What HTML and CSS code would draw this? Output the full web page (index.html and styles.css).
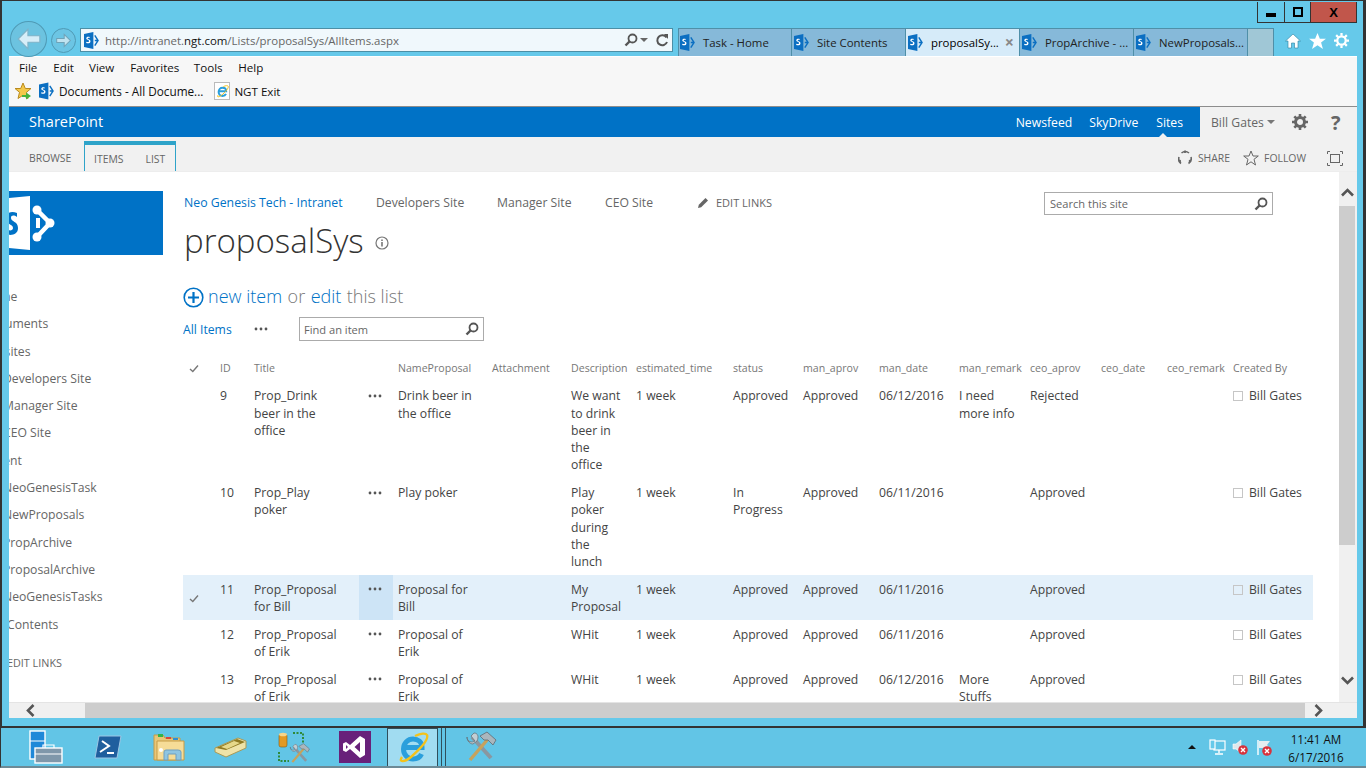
FILE: index.html
```html
<!DOCTYPE html>
<html lang="en">
<head>
<meta charset="utf-8">
<title>proposalSys</title>
<link rel="stylesheet" href="styles.css">
</head>
<body>
<svg class="defs" width="0" height="0" aria-hidden="true">
  <symbol id="sp" viewBox="0 0 16 18">
    <path d="M0 2 10 0V18L0 16Z" fill="#0b6fc2"/>
    <path d="M5.6 5.1C3.9 4.7 2.4 5.1 2.4 6.7c0 2 3 1.500 3 3 0 .9-1.300 1-3 .5v1.500c2 .6 4.500.3 4.500-2 0-2.100-3-1.700-3-3 0-.8 1-.9 2.700-.5Z" fill="#fff"/>
    <path d="M11.500 3.500 15 9l-3.500 5.500M11.500 9H15" fill="none" stroke="#0b6fc2" stroke-width="1.500"/>
  </symbol>
  <symbol id="dots" viewBox="0 0 14 4">
    <circle cx="2" cy="2" r="1.400" fill="#555"/><circle cx="7" cy="2" r="1.400" fill="#555"/><circle cx="12" cy="2" r="1.400" fill="#555"/>
  </symbol>
  <symbol id="lens" viewBox="0 0 14 14">
    <circle cx="8.500" cy="5.500" r="4" fill="none" stroke="#555" stroke-width="1.800"/>
    <path d="M5.500 8.500 1.500 12.500" stroke="#555" stroke-width="2.400"/>
  </symbol>
  <symbol id="tick" viewBox="0 0 10 9">
    <path d="M1 5 3.800 7.500 9 1.500" fill="none" stroke="#777" stroke-width="1.400"/>
  </symbol>
  <symbol id="ie" viewBox="0 0 32 32">
    <path d="M8 15.500H25C25 10 21 7 16 7 11 7 6.500 11 6.500 17S11 27 16 27c4 0 7-1.500 8.500-5" fill="none" stroke="#2a9fdc" stroke-width="5"/>
    <path d="M5 25C1 31 8 30 14 25 22 18 32 8 30 3c-1-2-6-2-12 1" fill="none" stroke="#f4c21a" stroke-width="2.400"/>
  </symbol>
  <symbol id="tools" viewBox="0 0 32 32">
    <path d="M7 6 26 27" stroke="#8a97a0" stroke-width="4"/>
    <path d="M2 6C2 11 7 12 10 10L6 5 9 2C13 2 14 6 12 10L8 13C5 13 2 10 2 6Z" fill="#c3ced4" stroke="#66727a" stroke-width=".8"/>
    <path d="M5 29 23 8" stroke="#c6a25c" stroke-width="3.400"/>
    <path d="M15 5 22 1 31 9 28 14 23 9 19 9Z" fill="#a9b6bd" stroke="#5e6a72" stroke-width=".8"/>
  </symbol>
  <symbol id="redx" viewBox="0 0 10 10">
    <circle cx="5" cy="5" r="4.800" fill="#d8323c"/>
    <path d="M3 3 7 7M7 3 3 7" stroke="#fff" stroke-width="1.400"/>
  </symbol>
</svg>

<div class="window">
  <div class="titlebar">
    <div class="caption">
      <div class="cap cap-min"><span class="min-glyph"></span></div>
      <div class="cap cap-max"><span class="max-glyph"></span></div>
      <div class="cap cap-close">X</div>
    </div>
  </div>

  <div class="navrow">
    <div class="back">
      <svg width="26" height="24" viewBox="0 0 24 22"><path d="M11 2 2 11l9 9v-6h11V8H11Z" fill="#d7eef8" stroke="#7fb3c8"/></svg>
    </div>
    <div class="forward">
      <svg width="17" height="15" viewBox="0 0 24 22"><path d="M13 2l9 9-9 9v-6H2V8h11Z" fill="#bfe3f0" stroke="#6fa3b8" stroke-width="1.500"/></svg>
    </div>
    <div class="urlbar">
      <svg class="url-sp" width="15" height="17"><use href="#sp"/></svg>
      <div class="url-text">http://intranet.<b>ngt.com</b>/Lists/proposalSys/AllItems.aspx</div>
      <svg class="url-lens" width="14" height="14"><use href="#lens"/></svg>
      <span class="url-caret"></span>
      <svg class="url-refresh" width="13" height="14" viewBox="0 0 13 14"><path d="M10.500 4.500A5 5 0 1 0 11 9" fill="none" stroke="#555" stroke-width="2"/><path d="M8 1 12 1 12 6Z" fill="#555"/></svg>
    </div>
    <div class="tabs">
      <div class="tab"><svg width="15" height="17"><use href="#sp"/></svg><span>Task - Home</span></div>
      <div class="tab"><svg width="15" height="17"><use href="#sp"/></svg><span>Site Contents</span></div>
      <div class="tab tab-active"><svg width="15" height="17"><use href="#sp"/></svg><span>proposalSy...</span><i class="tab-x">×</i></div>
      <div class="tab"><svg width="15" height="17"><use href="#sp"/></svg><span>PropArchive - ...</span></div>
      <div class="tab"><svg width="15" height="17"><use href="#sp"/></svg><span>NewProposals...</span></div>
      <div class="tab tab-new"></div>
    </div>
    <div class="ie-tools">
      <svg width="16" height="16" viewBox="0 0 16 16"><path d="M8 1 15.500 8H13V15H9.500V10H6.500V15H3V8H.5Z" fill="#fff" stroke="#2d7f9f" stroke-width=".6"/></svg>
      <svg width="17" height="16" viewBox="0 0 18 17"><path d="M9 0 11.500 6H18L12.800 10 14.800 17 9 13 3.200 17 5.200 10 0 6H6.500Z" fill="#fff"/></svg>
      <svg width="15" height="15" viewBox="0 0 16 16"><circle cx="8" cy="8" r="4.500" fill="none" stroke="#fff" stroke-width="2.400"/><path d="M8 0V3M8 13V16M0 8H3M13 8H16M2.300 2.300 4.500 4.500M11.500 11.500 13.700 13.700M13.700 2.300 11.500 4.500M4.500 11.500 2.300 13.700" stroke="#fff" stroke-width="2.400"/></svg>
    </div>
  </div>

  <div class="menus">
    <div class="menubar">
      <span class="m-file">File</span><span class="m-edit">Edit</span><span class="m-view">View</span><span class="m-fav">Favorites</span><span class="m-tools">Tools</span><span class="m-help">Help</span>
    </div>
    <div class="favbar">
      <svg class="fav-star" width="18" height="18" viewBox="0 0 18 18"><path d="M9 1 11.300 6.500H17L12.500 10.300 14 16.500 9 13.200 4 16.500 5.500 10.300 1 6.500H6.700Z" fill="#f4c84a" stroke="#b98a1e"/><path d="M8 13H12V10.500L17 14 12 17.500V15H8Z" fill="#46b23c"/></svg>
      <svg class="fav-sp" width="15" height="18"><use href="#sp"/></svg>
      <span class="fav-doc">Documents - All Docume...</span>
      <span class="fav-page"><svg width="13" height="13"><use href="#ie"/></svg></span>
      <span>NGT Exit</span>
    </div>
  </div>

  <div class="sp-top">
    <div class="sp-brand">SharePoint</div>
    <div class="sp-links">
      <span>Newsfeed</span><span>SkyDrive</span><span class="sp-sites">Sites</span>
    </div>
    <div class="sp-user">
      <span class="user-name">Bill Gates</span><span class="user-caret"></span>
      <svg class="user-gear" width="16" height="16" viewBox="0 0 16 16"><circle cx="8" cy="8" r="4.500" fill="none" stroke="#666" stroke-width="3"/><path d="M8 0V3M8 13V16M0 8H3M13 8H16M2.300 2.300 4.500 4.500M11.500 11.500 13.700 13.700M13.700 2.300 11.500 4.500M4.500 11.500 2.300 13.700" stroke="#666" stroke-width="2.600"/></svg>
      <span class="user-help">?</span>
    </div>
  </div>

  <div class="ribbon">
    <span class="rb-browse">BROWSE</span>
    <div class="rb-ctx"><span>ITEMS</span><span>LIST</span></div>
    <div class="rb-right">
      <svg width="14" height="16" viewBox="0 0 14 16"><path d="M3.500 3A6 6 0 0 1 11 3M13 7a6 6 0 0 1-2.500 6.500M3 13.500A6 6 0 0 1 1 7" fill="none" stroke="#666" stroke-width="1.600"/><circle cx="7" cy="1.800" r="1.300" fill="#666"/><circle cx="1.800" cy="11" r="1.300" fill="#666"/><circle cx="12" cy="11" r="1.300" fill="#666"/></svg>
      <span class="rb-share">SHARE</span>
      <svg class="rb-star" width="16" height="16" viewBox="0 0 16 16"><path d="M8 1 10 6H15.300L11 9.300 12.500 15 8 11.800 3.500 15 5 9.300 .7 6H6Z" fill="none" stroke="#666"/></svg>
      <span class="rb-follow">FOLLOW</span>
      <svg class="rb-focus" width="16" height="15" viewBox="0 0 16 15"><rect x="3.500" y="3.500" width="9" height="8" fill="none" stroke="#666"/><path d="M.5 3V.5H3M13 .5H15.500V3M15.500 12V14.500H13M3 14.500H.5V12" fill="none" stroke="#666"/></svg>
    </div>
  </div>

  <div class="viewport">
    <div class="page">
      <aside class="side">
        <div class="logo">
          <svg width="60" height="64" viewBox="0 0 60 64">
            <path d="M-10 8 21 5V59L-10 56Z" fill="#fff"/>
            <path d="M8 22C3 20-3 21-3 27c0 7 7 6 7 10 0 3-4 3-8 1v5c6 2 13 1 13-6 0-7-7-6-7-10 0-3 3-3 6-1Z" fill="#0072c6"/>
            <path d="M28 19 41 32 28 46" fill="none" stroke="#fff" stroke-width="4.500"/>
            <path d="M29 27V37" stroke="#fff" stroke-width="4"/>
            <circle cx="28" cy="19" r="4.500" fill="#fff"/><circle cx="41" cy="32" r="4.500" fill="#fff"/><circle cx="28" cy="46" r="4.500" fill="#fff"/>
          </svg>
        </div>
        <nav class="quick">
          <div>Home</div>
          <div>Documents</div>
          <div>Subsites</div>
          <div class="sub">Developers Site</div>
          <div class="sub">Manager Site</div>
          <div class="sub">CEO Site</div>
          <div>Recent</div>
          <div class="sub">NeoGenesisTask</div>
          <div class="sub">NewProposals</div>
          <div class="sub">PropArchive</div>
          <div class="sub">ProposalArchive</div>
          <div class="sub">NeoGenesisTasks</div>
          <div>Site Contents</div>
          <div class="nav-edit">EDIT LINKS</div>
        </nav>
      </aside>

      <main class="main">
        <div class="head">
          <div class="crumbs">
            <a class="crumb-home">Neo Genesis Tech - Intranet</a>
            <span class="crumb-dev">Developers Site</span>
            <span class="crumb-man">Manager Site</span>
            <span class="crumb-ceo">CEO Site</span>
            <svg class="crumb-pen" width="12" height="12" viewBox="0 0 12 12"><path d="M1 11 1.800 7.800 8.500 1 11 3.500 4.200 10.200Z" fill="#666"/></svg>
            <span class="crumb-edit">EDIT LINKS</span>
          </div>
          <div class="searchbox"><span>Search this site</span><svg width="14" height="14"><use href="#lens"/></svg></div>
        </div>
        <div class="pagetitle"><h1>proposalSys</h1>
          <svg width="14" height="14" viewBox="0 0 14 14"><circle cx="7" cy="7" r="6" fill="none" stroke="#777" stroke-width="1.200"/><path d="M7 6V10.500M7 3.500V5" stroke="#777" stroke-width="1.600"/></svg>
        </div>
        <div class="newitem">
          <svg width="21" height="21" viewBox="0 0 21 21"><circle cx="10.500" cy="10.500" r="9.300" fill="none" stroke="#0072c6" stroke-width="1.600"/><path d="M10.500 5V16M5 10.500H16" stroke="#0072c6" stroke-width="2.200"/></svg>
          <span class="lnk">new item</span> <span>or</span> <span class="lnk">edit</span> <span>this list</span>
        </div>
        <div class="viewbar">
          <span class="allitems">All Items</span>
          <svg class="view-dots" width="14" height="4"><use href="#dots"/></svg>
          <div class="findbox"><span>Find an item</span><svg width="14" height="14"><use href="#lens"/></svg></div>
        </div>
        <table class="list">
          <colgroup>
            <col class="c-check"><col class="c-id"><col class="c-title"><col class="c-dots"><col class="c-name"><col class="c-att"><col class="c-desc"><col class="c-est"><col class="c-stat"><col class="c-maprov"><col class="c-mdate"><col class="c-mrem"><col class="c-caprov"><col class="c-cdate"><col class="c-crem"><col class="c-by">
          </colgroup>
          <thead>
            <tr>
              <th><svg class="tick tick-head" width="10" height="9"><use href="#tick"/></svg></th>
              <th>ID</th><th>Title</th><th></th><th>NameProposal</th><th>Attachment</th><th>Description</th><th>estimated_time</th><th>status</th><th>man_aprov</th><th>man_date</th><th>man_remark</th><th>ceo_aprov</th><th>ceo_date</th><th>ceo_remark</th><th>Created By</th>
            </tr>
          </thead>
          <tbody>
            <tr>
              <td></td><td>9</td><td>Prop_Drink<br>beer in the<br>office</td><td class="dotcell"><svg width="14" height="4"><use href="#dots"/></svg></td><td>Drink beer in<br>the office</td><td></td><td>We want<br>to drink<br>beer in<br>the<br>office</td><td>1 week</td><td>Approved</td><td>Approved</td><td>06/12/2016</td><td>I need<br>more info</td><td>Rejected</td><td></td><td></td><td><span class="pres"></span>Bill Gates</td>
            </tr>
            <tr>
              <td></td><td>10</td><td>Prop_Play<br>poker</td><td class="dotcell"><svg width="14" height="4"><use href="#dots"/></svg></td><td>Play poker</td><td></td><td>Play<br>poker<br>during<br>the<br>lunch</td><td>1 week</td><td>In<br>Progress</td><td>Approved</td><td>06/11/2016</td><td></td><td>Approved</td><td></td><td></td><td><span class="pres"></span>Bill Gates</td>
            </tr>
            <tr class="hot">
              <td class="tickcell"><svg class="tick" width="10" height="9"><use href="#tick"/></svg></td><td>11</td><td>Prop_Proposal<br>for Bill</td><td class="dotcell"><svg width="14" height="4"><use href="#dots"/></svg></td><td>Proposal for<br>Bill</td><td></td><td>My<br>Proposal</td><td>1 week</td><td>Approved</td><td>Approved</td><td>06/11/2016</td><td></td><td>Approved</td><td></td><td></td><td><span class="pres"></span>Bill Gates</td>
            </tr>
            <tr>
              <td></td><td>12</td><td>Prop_Proposal<br>of Erik</td><td class="dotcell"><svg width="14" height="4"><use href="#dots"/></svg></td><td>Proposal of<br>Erik</td><td></td><td>WHit</td><td>1 week</td><td>Approved</td><td>Approved</td><td>06/11/2016</td><td></td><td>Approved</td><td></td><td></td><td><span class="pres"></span>Bill Gates</td>
            </tr>
            <tr>
              <td></td><td>13</td><td>Prop_Proposal<br>of Erik</td><td class="dotcell"><svg width="14" height="4"><use href="#dots"/></svg></td><td>Proposal of<br>Erik</td><td></td><td>WHit</td><td>1 week</td><td>Approved</td><td>Approved</td><td>06/12/2016</td><td>More<br>Stuffs</td><td>Approved</td><td></td><td></td><td><span class="pres"></span>Bill Gates</td>
            </tr>
          </tbody>
        </table>
      </main>
    </div>
    <div class="vscroll">
      <div class="sb-btn sb-up"><svg width="13" height="9" viewBox="0 0 13 9"><path d="M1 7.500 6.500 2 12 7.500" fill="none" stroke="#555" stroke-width="2.600"/></svg></div>
      <div class="v-thumb"></div>
      <div class="v-rest"></div>
      <div class="sb-btn sb-down"><svg width="13" height="9" viewBox="0 0 13 9"><path d="M1 1.500 6.500 7 12 1.500" fill="none" stroke="#555" stroke-width="2.600"/></svg></div>
    </div>
  </div>
  <div class="hscroll">
    <div class="h-left"><svg width="9" height="13" viewBox="0 0 9 13"><path d="M7.500 1 2 6.500 7.500 12" fill="none" stroke="#555" stroke-width="2.600"/></svg></div>
    <div class="h-thumb"></div>
    <div class="h-right"><svg width="9" height="13" viewBox="0 0 9 13"><path d="M1.500 1 7 6.500 1.500 12" fill="none" stroke="#555" stroke-width="2.600"/></svg></div>
  </div>
</div>

<footer class="taskbar">
  <div class="tb-item tb-server">
    <svg width="34" height="34" viewBox="0 0 34 34"><rect x="1" y="1" width="15" height="28" fill="#1f88d8" stroke="#fff" stroke-width="1.400"/><path d="M1 11H16" stroke="#fff"/><rect x="6" y="18" width="27" height="15" fill="#7f97aa" stroke="#fff" stroke-width="1.400"/><path d="M14 18V15H25V18M6 24H33" fill="none" stroke="#fff" stroke-width="1.200"/></svg>
  </div>
  <div class="tb-item tb-ps">
    <svg width="28" height="24" viewBox="0 0 28 24"><path d="M5 1H27L23 23H1Z" fill="#1f5f9e" stroke="#9cc6e4"/><path d="M8 6 15 11 6 17M13 18H20" fill="none" stroke="#fff" stroke-width="2"/></svg>
  </div>
  <div class="tb-item tb-exp">
    <svg width="32" height="30" viewBox="0 0 32 30"><path d="M1 3H10L12 6H27V28H1Z" fill="#e8c778" stroke="#c59b46"/><rect x="5" y="2" width="5" height="3" fill="#32b34a"/><rect x="13" y="5" width="5" height="2" fill="#d8463a"/><rect x="20" y="6" width="5" height="2" fill="#2b8fd8"/><path d="M4 9H31V28H4Z" fill="#f6dc97" stroke="#c59b46"/><path d="M11 28V20Q11 18 13 18H25Q28 18 28 20V28H23V22H15V28Z" fill="#8fc5e2" stroke="#6f9fc0"/><circle cx="8" cy="18" r="2" fill="#fff"/></svg>
  </div>
  <div class="tb-item tb-book">
    <svg width="33" height="22" viewBox="0 0 33 22"><path d="M1 12 24 2 32 5 32 12 12 21 1 16Z" fill="#efe3a8" stroke="#a99a56"/><path d="M2 12 23 3 31 6 12 14Z" fill="#8f7a22"/><path d="M7 11 20 5 26 7 13 13Z" fill="#e6d88a"/></svg>
  </div>
  <div class="tb-item tb-tooldb">
    <svg width="32" height="33" viewBox="0 0 32 33"><rect x="1" y="3" width="8" height="13" rx="2" fill="#e39a24" stroke="#8a5a10" stroke-width=".6"/><ellipse cx="5" cy="3.500" rx="4" ry="1.800" fill="#f6d58a"/><path d="M15 2H25V12M1 21V30H11" fill="none" stroke="#2f8a3a" stroke-width="2" stroke-dasharray="2 1.500"/><g transform="translate(11 12) scale(.66)"><use href="#tools" width="32" height="32"/></g></svg>
  </div>
  <div class="tb-item tb-vs">
    <svg width="32" height="32" viewBox="0 0 32 32"><rect width="32" height="32" fill="#68217a"/><path d="M21 5 26 8V24L21 27 11 18 7 21 4 19.500V12.500L7 11 11 14ZM21 11 15.500 16 21 21ZM7 14V18L9 16Z" fill="#fff" fill-rule="evenodd"/></svg>
  </div>
  <div class="tb-item tb-ie">
    <svg width="32" height="32"><use href="#ie"/></svg>
  </div>
  <span class="tb-sliver"></span><span class="tb-sliver"></span>
  <div class="tb-item tb-tools">
    <svg width="32" height="32"><use href="#tools"/></svg>
  </div>
  <div class="tray">
    <span class="tray-up"></span>
    <svg class="tray-net" width="17" height="17" viewBox="0 0 17 17"><rect x="5" y="2" width="11" height="9" fill="none" stroke="#fff" stroke-width="1.200"/><rect x="1" y="1" width="5" height="9" fill="#66c9ea" stroke="#fff" stroke-width="1.200"/><path d="M10 11V14M6 15H14" stroke="#fff" stroke-width="1.400"/></svg>
    <span class="tray-ico"><svg width="16" height="16" viewBox="0 0 16 16"><path d="M1 5H4L9 1V14L4 10H1Z" fill="#dfe8ec" stroke="#fff" stroke-width=".6"/><use href="#redx" x="6" y="6" width="10" height="10"/></svg></span>
    <span class="tray-ico tray-flag"><svg width="16" height="17" viewBox="0 0 16 17"><path d="M2 1V16" stroke="#fff" stroke-width="1.400"/><path d="M3 2H14L11 6 14 9H3Z" fill="#e4eef2"/><use href="#redx" x="6" y="7" width="10" height="10"/></svg></span>
    <div class="clock"><div>11:41 AM</div><div>6/17/2016</div></div>
  </div>
</footer>
</body>
</html>
```
FILE: styles.css
```css
* { box-sizing: border-box; }
html, body { margin: 0; padding: 0; }
body {
  width: 1366px; height: 768px; overflow: hidden;
  background: #3c3f41;
  font-family: "Open Sans", "Liberation Sans", sans-serif;
  font-size: 12.2px; color: #444;
}
svg { display: block; flex: none; }
.defs { position: absolute; }

/* window */
.window {
  height: 728px; background: #66c9ea;
  border-style: solid; border-color: #333;
  border-width: 1px 3px 2px 2px;
  padding: 0 6px 0 7px;
  display: flex; flex-direction: column;
}
.titlebar { height: 21px; display: flex; justify-content: flex-end; flex: none; }
.caption { display: flex; height: 21px; margin-top: 1px; border: 1px solid #333; border-top: 0; position: relative; z-index: 2; }
.cap { display: flex; align-items: center; justify-content: center; }
.cap-min { width: 27px; border-right: 1px solid #333; }
.cap-max { width: 26px; border-right: 1px solid #333; }
.cap-close { width: 45px; background: #c1564b; color: #000; font-weight: 700; font-family: "Liberation Sans", sans-serif; font-size: 13px; }
.min-glyph { width: 10px; height: 4px; background: #000; margin-top: 5px; }
.max-glyph { width: 10px; height: 10px; border: 2px solid #000; }

.navrow { height: 34px; display: flex; flex: none; position: relative; }
.back {
  width: 37px; height: 36px; margin: -1px 0 0 1px; border: 1px solid #4f9ab5; border-radius: 50%;
  display: flex; align-items: center; justify-content: center; background: #6cc3e0; flex: none;
}
.forward {
  width: 25px; height: 25px; margin: 6px 0 0 4px; border: 1px solid #4f9ab5; border-radius: 50%;
  display: flex; align-items: center; justify-content: center; background: #6cc5e4; flex: none;
}
.urlbar {
  width: 593px; height: 24px; margin: 6px 0 0 4px; background: #f0f8fc; border: 1px solid #4c8fa6;
  display: flex; align-items: center; padding-left: 3px; flex: none;
}
.url-text { margin-left: 6px; color: #666; font-size: 11.45px; flex: 1; white-space: nowrap; }
.url-text b { font-weight: 400; color: #111; }
.url-lens { margin-right: 2px; }
.url-caret { width: 0; height: 0; border: 4px solid transparent; border-top: 4px solid #666; border-bottom: 0; margin-right: 8px; }
.url-refresh { margin-right: 3px; }
.tabs { display: flex; height: 28px; margin: 6px 0 0 5px; border-top: 1px solid #4f8fa8; flex: none; }
.tab {
  width: 114px; background: #86b9d9; border-right: 1px solid #4f8fa8; border-left: 0;
  display: flex; align-items: center; padding-left: 2px; color: #222; white-space: nowrap;
  font-size: 11.4px; position: relative;
}
.tabs .tab:first-child { border-left: 1px solid #4f8fa8; padding-left: 1px; }
.tab span { margin-left: 8px; }
.tab-active { background: #d6ebf9; color: #000; }
.tab-x { font-style: normal; color: #888; font-size: 16px; font-weight: 700; position: absolute; right: 5px; top: 2px; }
.tab-new { width: 26px; background: #a0c7d6; }
.ie-tools { display: flex; align-items: center; gap: 8px; margin: 3px 0 0 11px; }

.menus { background: #f7f7f7; flex: none; height: 51px; border-bottom: 1px solid #8d8d8d; border-top: 1px solid #fff; color: #111; font-size: 11.6px; }
.menubar { height: 20px; display: flex; align-items: center; }
.m-file { margin-left: 10px; }
.m-edit { margin-left: 16px; }
.m-view { margin-left: 15px; }
.m-fav { margin-left: 16px; }
.m-tools { margin-left: 14.5px; }
.m-help { margin-left: 15.5px; }
.favbar { height: 28px; display: flex; align-items: center; }
.fav-star { margin-left: 5px; }
.fav-sp { margin-left: 7px; }
.fav-doc { margin-left: 5px; white-space: nowrap; font-size: 11.75px; }
.fav-page { width: 16px; height: 18px; margin: 0 4px 0 11px; background: #fff; border: 1px solid #bbb; display: flex; align-items: center; justify-content: center; flex: none; }

/* SharePoint bar */
.sp-top { height: 30px; background: #0072c6; color: #fff; display: flex; flex: none; align-items: stretch; }
.sp-brand { font-size: 14.5px; margin-left: 20px; line-height: 30px; }
.sp-links { margin-left: auto; display: flex; align-items: center; font-size: 12.2px; padding-right: 17px; position: relative; }
.sp-links span { margin-left: 17px; }
.sp-links .sp-sites { margin-left: 18px; }
.sp-sites::after {
  content: ""; position: absolute; right: 33px; bottom: 0; width: 0; height: 0;
  border: 4px solid transparent; border-bottom-color: #f1f1f1; border-top: 0;
}
.sp-user { width: 157px; background: #f1f1f1; color: #666; display: flex; align-items: center; padding-left: 11px; }
.user-name { font-size: 12.2px; }
.user-caret { width: 0; height: 0; border: 4px solid transparent; border-top-color: #777; border-bottom: 0; margin-left: 3px; }
.user-gear { margin-left: 17px; }
.user-help { font-size: 20px; font-weight: 700; margin-left: 23px; color: #666; }

.ribbon { height: 35px; background: #f1f1f1; display: flex; flex: none; align-items: flex-end; color: #666; font-size: 10.4px; border-bottom: 1px solid #ededed; }
.rb-browse { margin: 0 0 6px 20px; width: 55px; }
.rb-ctx { width: 92px; height: 30px; border: 1px solid #2ea3c9; border-top: 4px solid #2ea3c9; border-bottom: 0; background: #f1f1f1; display: flex; align-items: center; padding: 2px 0 0 9px; gap: 22px; }
.rb-right { margin-left: auto; height: 100%; display: flex; align-items: center; padding: 8px 14px 0 0; }
.rb-share { margin-left: 6px; }
.rb-star { margin-left: 13px; }
.rb-follow { margin-left: 5px; }
.rb-focus { margin-left: 21px; }

/* page */
.viewport { height: 530px; display: flex; flex: none; }
.page { width: 1330px; background: #fff; display: flex; overflow: hidden; flex: none; }
.side { width: 174px; padding-top: 19px; overflow: hidden; flex: none; }
.logo { width: 154px; height: 64px; background: #0072c6; overflow: hidden; }
.logo svg { overflow: visible; }
.quick { margin: 28px 0 0 -26px; line-height: 27.3px; color: #666; white-space: nowrap; font-size: 12.2px; }
.quick .sub { margin-left: 20px; }
.nav-edit { margin-top: 11px; font-size: 10.8px; margin-left: 24px; }

.main { width: 1156px; overflow: hidden; flex: none; }
.head { display: flex; padding-top: 19px; align-items: flex-start; }
.crumbs { display: flex; align-items: center; height: 23px; white-space: nowrap; color: #666; }
.crumb-home { color: #0072c6; margin-left: 1px; width: 192px; font-size: 12.3px; }
.crumb-dev { width: 121px; }
.crumb-man { width: 108px; }
.crumb-ceo { width: 92px; }
.crumb-edit { font-size: 11px; margin-left: 7px; }
.searchbox, .findbox {
  height: 23px; border: 1px solid #ababab; display: flex; align-items: center; justify-content: space-between;
  padding: 0 4px 0 5px; color: #666; font-size: 11.1px; background: #fff;
}
.searchbox { width: 229px; margin-left: auto; margin-right: 66px; margin-top: 1px; }
.pagetitle { display: flex; align-items: center; margin-top: 3px; height: 44px; }
.pagetitle h1 { margin: 0 0 0 1px; font-size: 33px; font-weight: 300; color: #333; line-height: 43px; height: 43px; white-space: nowrap; }
.pagetitle svg { margin: 6px 0 0 11px; }
.newitem { margin-top: 20px; height: 28px; display: flex; align-items: center; gap: 5.500px; font-size: 18px; color: #777; font-weight: 300; white-space: nowrap; }
.newitem svg { margin-right: -1.500px; margin-top: 2px; }
.lnk { color: #0072c6; font-weight: 300; }
.viewbar { margin-top: 7px; height: 24px; display: flex; align-items: center; }
.allitems { color: #0072c6; width: 71px; }
.view-dots { margin-right: 31px; }
.findbox { width: 185px; height: 24px; padding-left: 4px; }

.list { table-layout: fixed; border-collapse: collapse; width: 1130px; margin-top: 13px; }
.c-check { width: 32px; } .c-id { width: 34px; } .c-title { width: 110px; } .c-dots { width: 34px; }
.c-name { width: 94px; } .c-att { width: 79px; } .c-desc { width: 65px; } .c-est { width: 97px; }
.c-stat { width: 70px; } .c-maprov { width: 76px; } .c-mdate { width: 80px; } .c-mrem { width: 71px; }
.c-caprov { width: 71px; } .c-cdate { width: 66px; } .c-crem { width: 66px; } .c-by { width: 85px; }
.list th { height: 28px; padding: 0 0 0 5px; font-weight: 400; font-size: 10.6px; color: #777; text-align: left; white-space: nowrap; }
.list td { padding: 5.450px 0 5px 5px; vertical-align: top; line-height: 17.250px; white-space: nowrap; }
.list td.dotcell { padding: 12px 0 0 9px; }
.tick { margin-left: 1px; }
.list td.tickcell { vertical-align: middle; }
.hot { background: #e3f0fa; }
.hot td.dotcell { background: #cde4f6; }
.pres { display: inline-block; width: 10px; height: 10px; border: 1px solid #c6c6c6; margin-right: 6px; vertical-align: -1px; }

/* scrollbars */
.vscroll { width: 18px; background: #f0f0f0; display: flex; flex-direction: column; padding-right: 2px; flex: none; }
.sb-btn { height: 34px; display: flex; align-items: center; justify-content: center; }
.sb-up { padding-top: 7px; }
.sb-down { height: 37px; padding-bottom: 6px; }
.v-thumb { height: 339px; background: #cdcdcd; }
.v-rest { flex: 1; }
.hscroll { height: 16px; background: #f0f0f0; display: flex; flex: none; align-items: stretch; border-top: 1px solid #e4e4e4; }
.h-left { width: 76px; display: flex; align-items: center; padding-left: 17px; }
.h-thumb { width: 1220px; background: #cdcdcd; }
.h-right { flex: 1; display: flex; align-items: center; padding-left: 9px; }

/* taskbar */
.taskbar { height: 40px; background: #62c5e6; border-left: 1px solid #333; border-bottom: 2px solid #6d8a96; display: flex; align-items: center; color: #111; }
.tb-item { display: flex; align-items: center; justify-content: center; height: 100%; flex: none; }
.tb-server { margin-left: 28px; }
.tb-ps { margin-left: 31px; }
.tb-exp { margin-left: 31px; }
.tb-book { margin-left: 29px; }
.tb-tooldb { margin-left: 31px; }
.tb-vs { margin-left: 29px; }
.tb-ie { width: 51px; margin-left: 16px; background: #a1dcf1; border: 1px solid #2f4f5c; border-bottom: 0; }
.tb-sliver { width: 4px; height: 100%; border-right: 1px solid #2f4f5c; flex: none; }
.tb-tools { margin-left: 19px; }
.tray { margin-left: auto; display: flex; align-items: center; height: 100%; }
.tray-up { width: 0; height: 0; border: 4px solid transparent; border-bottom: 4px solid #111; border-top: 0; }
.tray-net { margin-left: 13px; }
.tray-ico { margin-left: 6px; }
.tray-flag { margin-left: 8px; }
.clock { width: 86px; text-align: center; font-size: 11.7px; line-height: 18px; margin-left: 1px; margin-right: 7px; padding-top: 1px; }
```
